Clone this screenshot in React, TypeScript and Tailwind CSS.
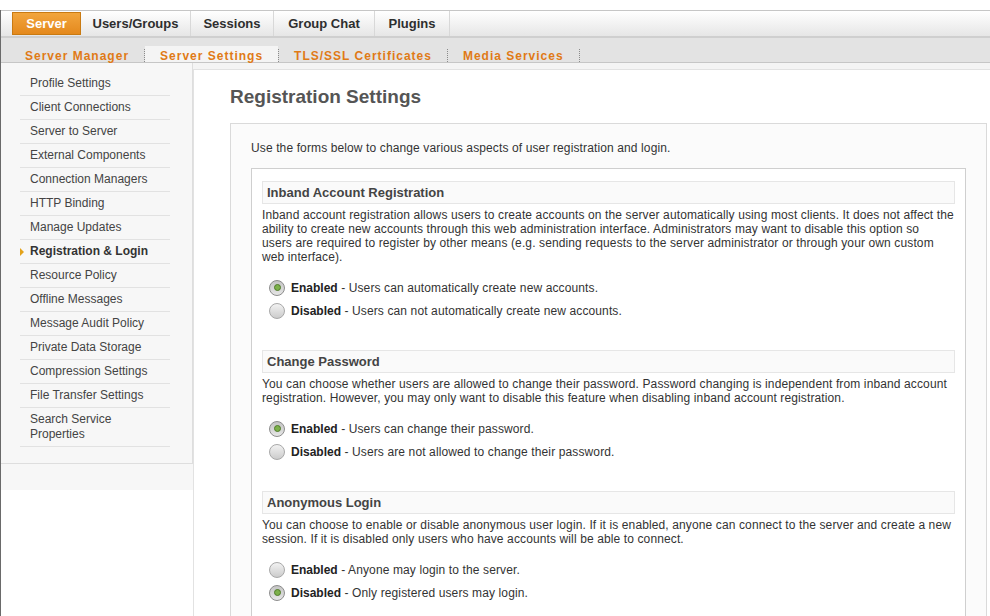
import React from 'react';

const mainTabs = [
  { label: 'Users/Groups', w: 'w-[110px]' },
  { label: 'Sessions', w: 'w-[83px]' },
  { label: 'Group Chat', w: 'w-[101px]' },
  { label: 'Plugins', w: 'w-[75px]' },
];

const subTabs = ['Server Manager', 'Server Settings', 'TLS/SSL Certificates', 'Media Services'];

const sideItems = [
  'Profile Settings',
  'Client Connections',
  'Server to Server',
  'External Components',
  'Connection Managers',
  'HTTP Binding',
  'Manage Updates',
  'Registration & Login',
  'Resource Policy',
  'Offline Messages',
  'Message Audit Policy',
  'Private Data Storage',
  'Compression Settings',
  'File Transfer Settings',
  'Search Service Properties',
];

// descriptions kept line by line so they wrap like the original page
const sections = [
  {
    title: 'Inband Account Registration',
    desc: [
      'Inband account registration allows users to create accounts on the server automatically using most clients. It does not affect the',
      'ability to create new accounts through this web administration interface. Administrators may want to disable this option so',
      'users are required to register by other means (e.g. sending requests to the server administrator or through your own custom',
      'web interface).',
    ],
    options: [
      { label: 'Enabled', text: 'Users can automatically create new accounts.', checked: true },
      { label: 'Disabled', text: 'Users can not automatically create new accounts.', checked: false },
    ],
  },
  {
    title: 'Change Password',
    desc: [
      'You can choose whether users are allowed to change their password. Password changing is independent from inband account',
      'registration. However, you may only want to disable this feature when disabling inband account registration.',
    ],
    options: [
      { label: 'Enabled', text: 'Users can change their password.', checked: true },
      { label: 'Disabled', text: 'Users are not allowed to change their password.', checked: false },
    ],
  },
  {
    title: 'Anonymous Login',
    desc: [
      'You can choose to enable or disable anonymous user login. If it is enabled, anyone can connect to the server and create a new',
      'session. If it is disabled only users who have accounts will be able to connect.',
    ],
    options: [
      { label: 'Enabled', text: 'Anyone may login to the server.', checked: false },
      { label: 'Disabled', text: 'Only registered users may login.', checked: true },
    ],
  },
];

function Radio({ checked }: { checked: boolean }) {
  // grey glossy radio, green dot when selected
  return checked ? (
    <span className="flex h-4 w-4 shrink-0 items-center justify-center rounded-full border border-[#8c8c8c] bg-gradient-to-b from-[#c4c4c4] to-[#e6e6e6]">
      <span className="h-[7px] w-[7px] rounded-full border border-[#4f7a2a] bg-[#7cb04a]" />
    </span>
  ) : (
    <span className="h-4 w-4 shrink-0 rounded-full border border-[#a8a8a8] bg-gradient-to-b from-[#f2f2f2] to-[#cccccc]" />
  );
}

export default function App() {
  return (
    <div className="relative h-[616px] w-[990px] overflow-hidden bg-white font-['Liberation_Sans',Arial,sans-serif] text-[12px] text-[#333]">
      <div className="h-[10px]" />

      <div className="flex h-[606px] flex-col border-l border-[#6a6a6a]">
        {/* Main tabs */}
        <div className="flex h-[26px] shrink-0 border-t border-[#c6c6c6] bg-gradient-to-b from-white to-[#e6e6e6] pl-[11px]">
          <div className="mt-px flex h-[23px] w-[69px] items-center justify-center border border-[#c97a12] bg-gradient-to-b from-[#f2a53c] to-[#e4891c] text-[13px] font-bold text-white">
            Server
          </div>
          {mainTabs.map((t) => (
            <div
              key={t.label}
              className={`flex h-full items-center justify-center border-r border-[#d8d8d8] text-[13px] font-bold text-[#2e2e2e] ${t.w}`}
            >
              {t.label}
            </div>
          ))}
        </div>
        <div className="h-[2px] shrink-0 bg-[#cfcfcf]" />

        {/* Sub tabs */}
        <div className="flex h-[25px] shrink-0 items-end border-b border-[#c6c6c6] bg-[#e3e3e3] pl-[9px]">
          {subTabs.map((t, i) => (
            <div key={t} className="flex h-[16px] items-end">
              <div
                className={`h-[16px] px-[15px] pt-[4px] text-[12px] leading-[12px] font-bold tracking-[1px] text-[#e07a16] ${
                  i === 1 ? 'bg-[#f4f4f4]' : ''
                }`}
              >
                {t}
              </div>
              <div className="h-[13px] border-l border-dotted border-[#8a8a8a]" />
            </div>
          ))}
        </div>

        <div className="flex min-h-0 flex-1">
          {/* Sidebar */}
          <div className="h-[427px] w-[196px] shrink-0 bg-[#f7f7f7]">
            <div className="w-[192px] border-r border-b border-[#dedede] pt-[9px] pb-[16px] pl-[19px]">
              <ul className="w-[150px]">
                {sideItems.map((item) => {
                  const active = item === 'Registration & Login';
                  return (
                    <li
                      key={item}
                      className={`relative border-b border-[#e2e2e2] py-[4px] pl-[10px] pr-2 leading-[15px] ${
                        active ? 'font-bold text-[#333]' : 'text-[#444]'
                      }`}
                    >
                      {active && (
                        <span className="absolute left-0 top-[8px] h-0 w-0 border-y-[4px] border-l-[4px] border-y-transparent border-l-[#e3a21a]" />
                      )}
                      {item}
                    </li>
                  );
                })}
              </ul>
            </div>
          </div>

          {/* Content */}
          <div className="-ml-[4px] flex min-w-0 flex-1 flex-col">
            <div className="h-[6px] shrink-0 bg-[#f4f4f4]" />
            <div className="flex-1 border-t border-l border-[#e2e2e2] bg-white pl-[36px] pr-[3px]">
              <h1 className="mt-[15px] text-[19px] font-bold leading-[24px] text-[#555]">Registration Settings</h1>

              <div className="mt-[14px] border border-[#dadada] bg-[#fbfbfb] px-[20px] pt-[17px] tracking-[0.12px]">
                <p className="leading-[14px]">Use the forms below to change various aspects of user registration and login.</p>

                <div className="mt-[13px] border border-[#cfcfcf] bg-white px-[10px] pt-[12px]">
                  {sections.map((s) => (
                    <div key={s.title} className="mb-[28px]">
                      <div className="flex h-[23px] items-center border border-[#e6e6e6] bg-[#fafafa] pl-[4px] text-[13px] font-bold tracking-normal text-[#444]">
                        {s.title}
                      </div>
                      <p className="mt-[4px] whitespace-nowrap leading-[14px]">
                        {s.desc.map((line, i) => (
                          <React.Fragment key={i}>
                            {i > 0 && <br />}
                            {line}
                          </React.Fragment>
                        ))}
                      </p>
                      <div className="mt-[12px] pl-[7px]">
                        {s.options.map((o) => (
                          <div key={o.label} className="flex h-[23px] items-center">
                            <Radio checked={o.checked} />
                            <span className="ml-[6px]">
                              <b className="tracking-normal text-[#222]">{o.label}</b> - {o.text}
                            </span>
                          </div>
                        ))}
                      </div>
                    </div>
                  ))}
                </div>
              </div>
            </div>
          </div>
        </div>
      </div>
    </div>
  );
}
